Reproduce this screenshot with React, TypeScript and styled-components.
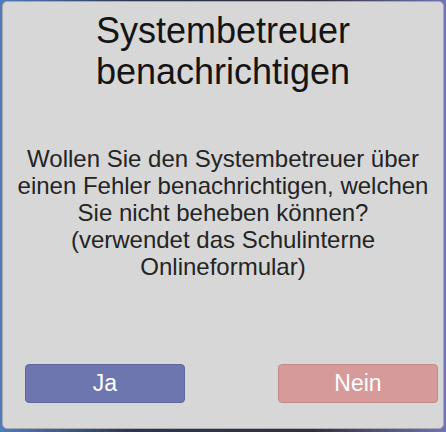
import styled, { createGlobalStyle } from 'styled-components';

const GlobalStyle = createGlobalStyle`
  html, body {
    margin: 0;
    padding: 0;
  }
  body {
    font-family: 'Liberation Sans', Arial, sans-serif;
  }
`;

const Backdrop = styled.div`
  width: 446px;
  height: 432px;
  box-sizing: border-box;
  padding: 1px 2px 3px 2px;
  background: linear-gradient(90deg, #4f7cbc 0%, #2c3550 30%, #30303c 70%, #7073b6 100%);
  display: flex;
`;

const Dialog = styled.div`
  flex: 1;
  display: flex;
  flex-direction: column;
  background-color: #d7d7d7;
  border: 1px solid #a9a9ad;
  border-radius: 5px;
  box-sizing: border-box;
  padding: 8px 4px 25px;
`;

const Title = styled.h1`
  margin: 0;
  font-size: 36px;
  line-height: 41px;
  font-weight: 400;
  color: #141414;
  text-align: center;
`;

const Message = styled.p`
  margin: 53px 0 0;
  font-size: 24px;
  line-height: 27px;
  color: #242424;
  text-align: center;
`;

const Actions = styled.div`
  margin-top: auto;
  padding: 0 1px 0 18px;
  display: flex;
  justify-content: space-between;
`;

const Button = styled.button<{ tone: 'confirm' | 'cancel' }>`
  width: 160px;
  height: 39px;
  border-radius: 4px;
  border: 1px solid ${(p) => (p.tone === 'confirm' ? '#5f679e' : '#c48a8a')};
  background-color: ${(p) => (p.tone === 'confirm' ? '#6e76b0' : '#d69a9a')};
  color: #ffffff;
  font-family: 'Liberation Sans', Arial, sans-serif;
  font-size: 23px;
  padding: 0;
  cursor: pointer;
`;

export default function App() {
  return (
    <>
      <GlobalStyle />
      <Backdrop>
        <Dialog>
          <Title>
            Systembetreuer
            <br />
            benachrichtigen
          </Title>
          <Message>
            Wollen Sie den Systembetreuer über einen Fehler benachrichtigen, welchen Sie nicht
            beheben können?
            <br />
            (verwendet das Schulinterne Onlineformular)
          </Message>
          <Actions>
            <Button tone="confirm">Ja</Button>
            <Button tone="cancel">Nein</Button>
          </Actions>
        </Dialog>
      </Backdrop>
    </>
  );
}
